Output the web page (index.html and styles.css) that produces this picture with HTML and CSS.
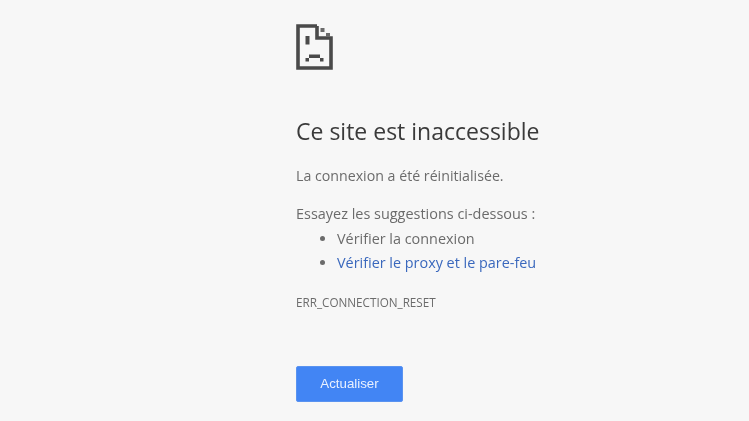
FILE: index.html
```html
<!DOCTYPE html>
<html lang="fr">
<head>
  <meta charset="UTF-8" />
  <title>Ce site est inaccessible</title>
  <link rel="stylesheet" href="styles.css">
</head>
<body>
  <div class="container">
    <svg class="icon" width="38" height="46" viewBox="0 0 38 46">
      <path d="M21 2H2V44H35V14H21V2" fill="none" stroke="#4a4a4a" stroke-width="3.6"/>
      <path d="M24.500 4h4v4h-4zM30 9h4v4h-4z" fill="#6a6a6a"/>
      <path d="M9.500 12h4v8.500h-4zM13 30.500h11v3.500H13zM9.500 34h3.500v3.500H9.500zM24 34h3.500v3.500H24z" fill="#4a4a4a"/>
    </svg>
    <h1 class="title">Ce site est inaccessible</h1>
    <p class="summary">La connexion a été réinitialisée.</p>
    <p class="try">Essayez les suggestions ci-dessous :</p>
    <ul class="tips">
      <li>Vérifier la connexion</li>
      <li><a href="#">Vérifier le proxy et le pare-feu</a></li>
    </ul>
    <div class="code">ERR_CONNECTION_RESET</div>
    <button type="button" class="reload">Actualiser</button>
  </div>
</body>
</html>
```

FILE: styles.css
```css
body, html {
  margin: 0;
  padding: 0;
  height: 100%;
  overflow: hidden;
  background: #f7f7f7;
  font-family: "Open Sans", "Noto Sans", sans-serif;
  color: #6b6b6b;
}
.container {
  width: 300px;
  margin-left: 296px;
  padding-top: 24px;
  filter: blur(0.3px);
}
.icon {
  display: block;
}
.title {
  margin: 46px 0 0;
  font-size: 23px;
  line-height: 30px;
  font-weight: 400;
  color: #3a3a3a;
}
.summary, .try {
  margin: 0;
  line-height: 20px;
}
.summary {
  margin-top: 20px;
  font-size: 14.2px;
}
.try {
  margin-top: 18px;
  font-size: 14.45px;
}
.tips {
  margin: 3px 0 0;
  padding-left: 41px;
  font-size: 14.4px;
  line-height: 24px;
}
.tips a {
  color: #3a68bd;
  text-decoration: none;
}
.code {
  margin-top: 19px;
  font-size: 11.7px;
  line-height: 16px;
  white-space: nowrap;
}
.reload {
  display: block;
  margin-top: 56px;
  width: 107px;
  height: 36px;
  padding: 0 0 2px;
  background: #4285f4;
  border: 1px solid #5a93f0;
  border-radius: 2px;
  color: #e9f1ff;
  font-family: "Liberation Sans", Arial, sans-serif;
  font-size: 13.3px;
}
```
